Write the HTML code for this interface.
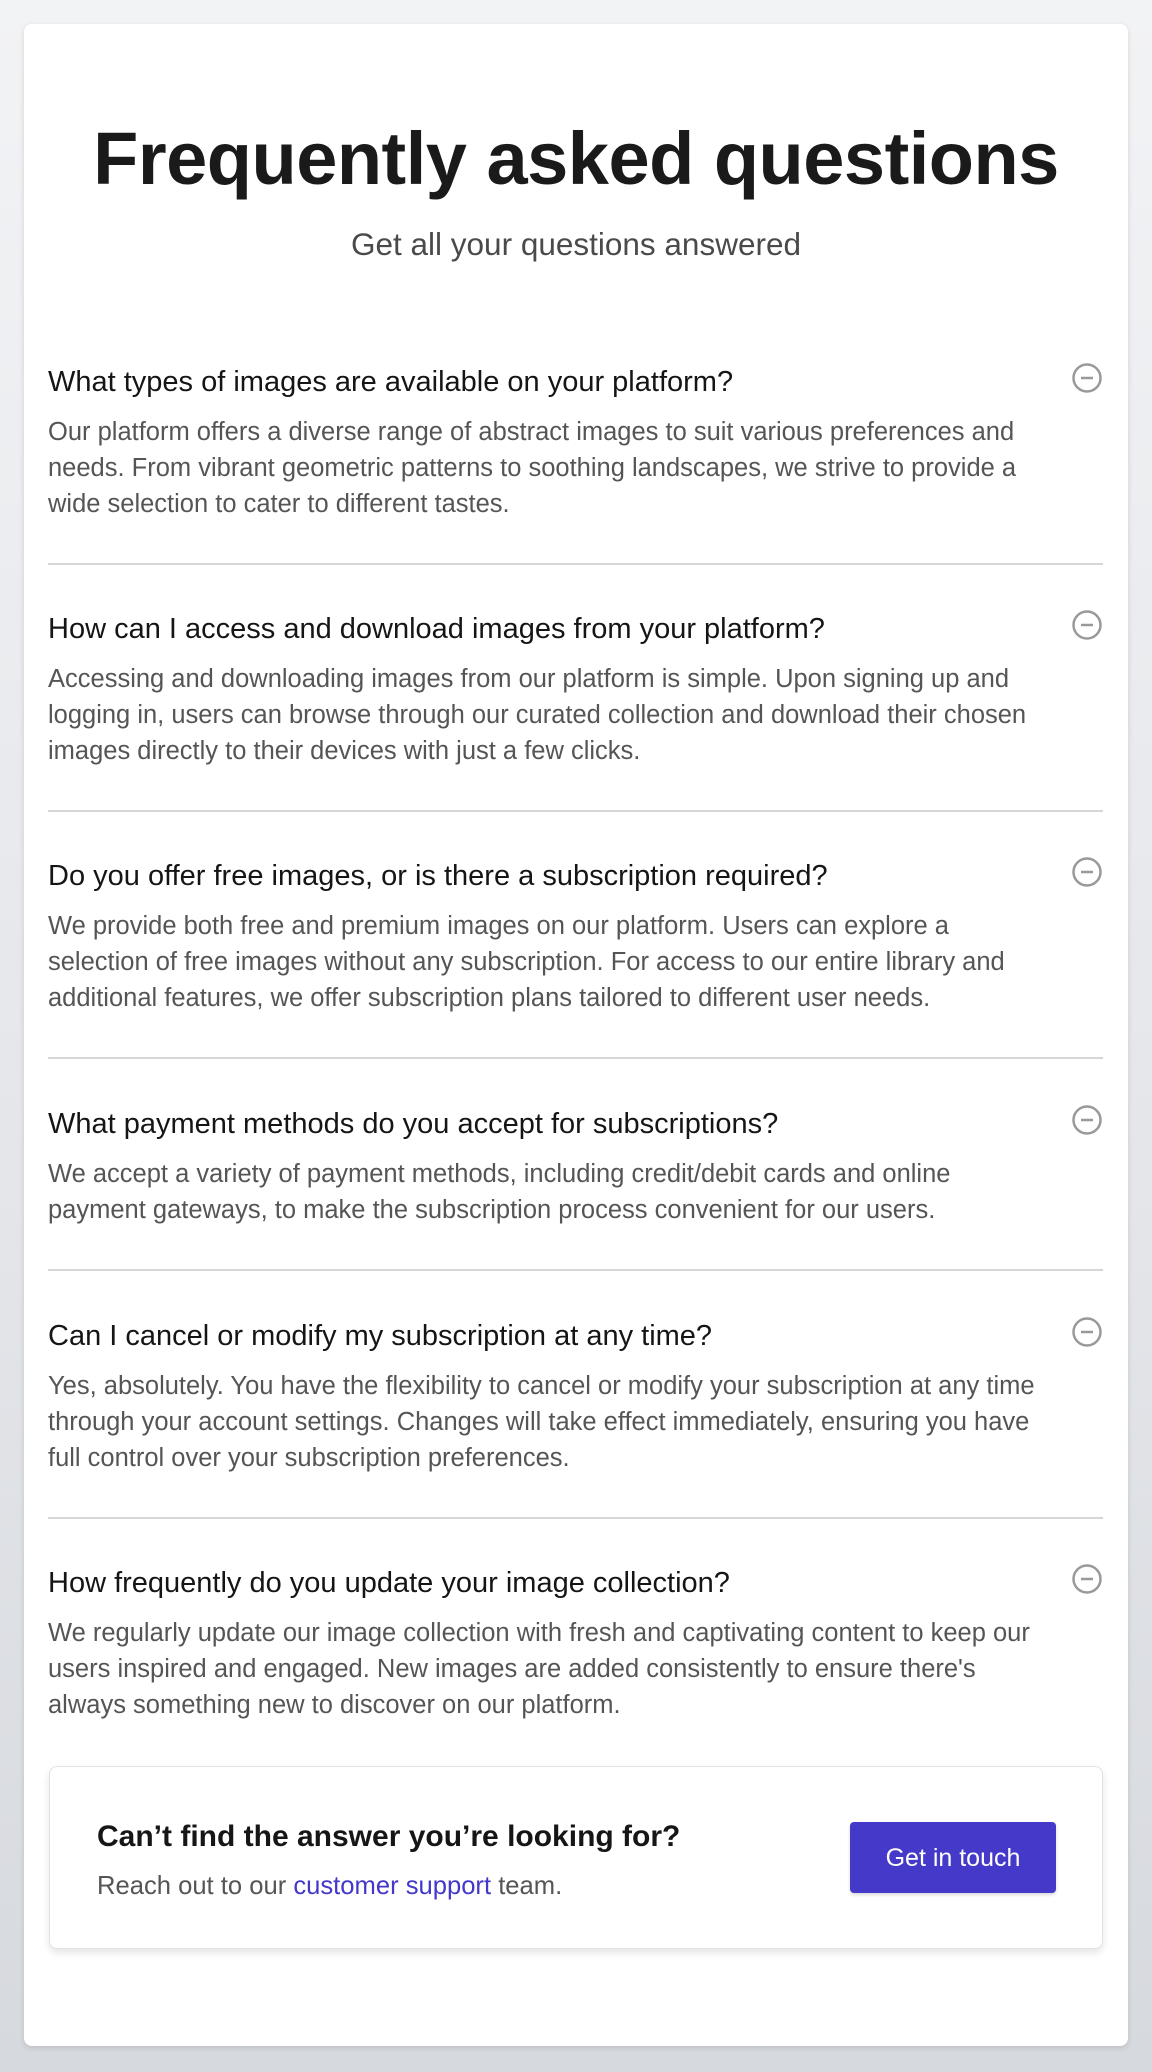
<!DOCTYPE html>
<html><head><meta charset="utf-8"><style>
*{margin:0;padding:0;box-sizing:border-box}
html,body{width:1152px;height:2072px;overflow:hidden}
body{background:linear-gradient(180deg,#f2f3f5 0%,#e3e5e9 60%,#d6d9de 100%);font-family:"Liberation Sans",sans-serif;position:relative}
.card{position:absolute;left:24px;top:24px;width:1104px;height:2022px;background:#fff;border-radius:8px;box-shadow:0 2px 6px rgba(0,0,0,.12)}
h1{position:absolute;left:0;width:1152px;top:114px;text-align:center;font-size:74px;font-weight:bold;color:#1a1a1a;letter-spacing:-0.5px;line-height:90px}
.sub{position:absolute;left:0;width:1152px;top:226px;text-align:center;font-size:31.5px;color:#4a4a4a;line-height:36px}
.q{position:absolute;left:48px;font-size:29px;color:#151515;line-height:32px;white-space:nowrap}
.a{position:absolute;left:48px;font-size:25.5px;color:#555;line-height:36px;white-space:nowrap}
.hr{position:absolute;left:48px;width:1055px;height:2px;background:#d6d6d9}
.ic{position:absolute;left:1071px;width:32px;height:32px}
.cta{position:absolute;left:49px;top:1766px;width:1054px;height:183px;border:1px solid #e2e2e4;border-radius:8px;background:#fff;box-shadow:0 4px 8px rgba(0,0,0,.1)}
.cta h2{position:absolute;left:47px;top:52px;font-size:30px;font-weight:bold;color:#161616;line-height:36px}
.cta p{position:absolute;left:47px;top:103px;font-size:25.6px;color:#555;line-height:32px}
.cta p span{color:#4338ca}
.btn{position:absolute;left:800px;top:55px;width:206px;height:71px;background:#4539c9;border-radius:4px;color:#fff;font-size:25px;line-height:73px;text-align:center;box-shadow:0 2px 3px rgba(0,0,0,.15)}
</style></head><body>
<div class="card"></div>
<h1>Frequently asked questions</h1>
<div class="sub">Get all your questions answered</div>

<div class="q" style="top:366px">What types of images are available on your platform?</div>
<svg class="ic" style="top:362px" viewBox="0 0 32 32"><circle cx="16" cy="16" r="13.5" fill="none" stroke="#999" stroke-width="2.5"/><line x1="10" y1="16" x2="22" y2="16" stroke="#999" stroke-width="2.5"/></svg>
<div class="a" style="top:414px">Our platform offers a diverse range of abstract images to suit various preferences and<br>needs. From vibrant geometric patterns to soothing landscapes, we strive to provide a<br>wide selection to cater to different tastes.</div>
<div class="hr" style="top:563px"></div>

<div class="q" style="top:613px">How can I access and download images from your platform?</div>
<svg class="ic" style="top:609px" viewBox="0 0 32 32"><circle cx="16" cy="16" r="13.5" fill="none" stroke="#999" stroke-width="2.5"/><line x1="10" y1="16" x2="22" y2="16" stroke="#999" stroke-width="2.5"/></svg>
<div class="a" style="top:661px">Accessing and downloading images from our platform is simple. Upon signing up and<br>logging in, users can browse through our curated collection and download their chosen<br>images directly to their devices with just a few clicks.</div>
<div class="hr" style="top:810px"></div>

<div class="q" style="top:860px">Do you offer free images, or is there a subscription required?</div>
<svg class="ic" style="top:856px" viewBox="0 0 32 32"><circle cx="16" cy="16" r="13.5" fill="none" stroke="#999" stroke-width="2.5"/><line x1="10" y1="16" x2="22" y2="16" stroke="#999" stroke-width="2.5"/></svg>
<div class="a" style="top:908px">We provide both free and premium images on our platform. Users can explore a<br>selection of free images without any subscription. For access to our entire library and<br>additional features, we offer subscription plans tailored to different user needs.</div>
<div class="hr" style="top:1057px"></div>

<div class="q" style="top:1108px">What payment methods do you accept for subscriptions?</div>
<svg class="ic" style="top:1104px" viewBox="0 0 32 32"><circle cx="16" cy="16" r="13.5" fill="none" stroke="#999" stroke-width="2.5"/><line x1="10" y1="16" x2="22" y2="16" stroke="#999" stroke-width="2.5"/></svg>
<div class="a" style="top:1156px">We accept a variety of payment methods, including credit/debit cards and online<br>payment gateways, to make the subscription process convenient for our users.</div>
<div class="hr" style="top:1269px"></div>

<div class="q" style="top:1320px">Can I cancel or modify my subscription at any time?</div>
<svg class="ic" style="top:1316px" viewBox="0 0 32 32"><circle cx="16" cy="16" r="13.5" fill="none" stroke="#999" stroke-width="2.5"/><line x1="10" y1="16" x2="22" y2="16" stroke="#999" stroke-width="2.5"/></svg>
<div class="a" style="top:1368px">Yes, absolutely. You have the flexibility to cancel or modify your subscription at any time<br>through your account settings. Changes will take effect immediately, ensuring you have<br>full control over your subscription preferences.</div>
<div class="hr" style="top:1517px"></div>

<div class="q" style="top:1567px">How frequently do you update your image collection?</div>
<svg class="ic" style="top:1563px" viewBox="0 0 32 32"><circle cx="16" cy="16" r="13.5" fill="none" stroke="#999" stroke-width="2.5"/><line x1="10" y1="16" x2="22" y2="16" stroke="#999" stroke-width="2.5"/></svg>
<div class="a" style="top:1615px">We regularly update our image collection with fresh and captivating content to keep our<br>users inspired and engaged. New images are added consistently to ensure there's<br>always something new to discover on our platform.</div>

<div class="cta">
<h2>Can’t find the answer you’re looking for?</h2>
<p>Reach out to our <span>customer support</span> team.</p>
<div class="btn">Get in touch</div>
</div>
</body></html>
